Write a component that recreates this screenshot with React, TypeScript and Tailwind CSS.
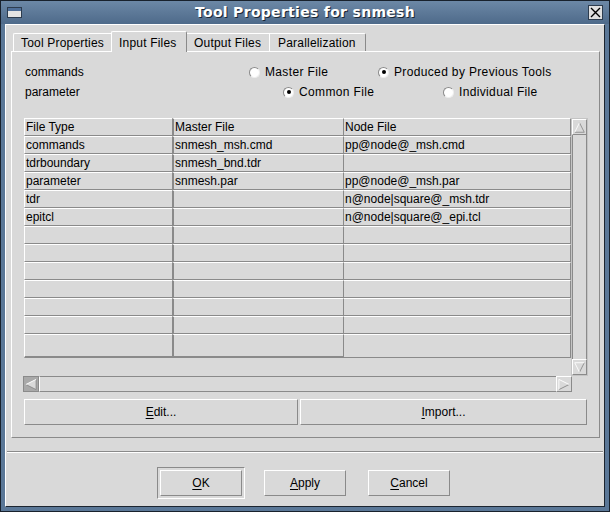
import React from 'react';

const rows = [
  ['commands', 'snmesh_msh.cmd', 'pp@node@_msh.cmd'],
  ['tdrboundary', 'snmesh_bnd.tdr', ''],
  ['parameter', 'snmesh.par', 'pp@node@_msh.par'],
  ['tdr', '', 'n@node|square@_msh.tdr'],
  ['epitcl', '', 'n@node|square@_epi.tcl'],
  ['', '', ''],
  ['', '', ''],
  ['', '', ''],
  ['', '', ''],
  ['', '', ''],
  ['', '', ''],
  ['', '', ''],
];

const Radio = ({ checked }: { checked?: boolean }) => (
  <span className="w-[11px] h-[11px] rounded-full bg-white border border-t-[#8a8a8a] border-l-[#8a8a8a] border-r-[#eeeeee] border-b-[#eeeeee] flex items-center justify-center mr-[5px]">
    {checked && <span className="w-[4px] h-[4px] rounded-full bg-black" />}
  </span>
);

const Raised = 'border border-t-white border-l-white border-r-[#8a8a8a] border-b-[#8a8a8a]';

const Mn = ({ c, rest }: { c: string; rest: string }) => (
  <span>
    <span className="underline underline-offset-2">{c}</span>
    {rest}
  </span>
);

// scrollbar arrow: light edge towards the top-left, shadow edge towards the bottom-right
const Arrow = ({ dir }: { dir: 'up' | 'down' | 'left' | 'right' }) => {
  const a = {
    up: { fill: '7.5,2 13,13 2,13', light: 'M2 13 L7.5 2', dark: 'M7.5 2 L13 13 L2 13' },
    down: { fill: '2,2 13,2 7.5,13', light: 'M7.5 13 L2 2 L13 2', dark: 'M13 2 L7.5 13' },
    left: { fill: '2,7.5 13,2 13,13', light: 'M13 2 L2 7.5', dark: 'M2 7.5 L13 13 L13 2' },
    right: { fill: '2,2 13,7.5 2,13', light: 'M2 13 L2 2 L13 7.5', dark: 'M13 7.5 L2 13' },
  }[dir];
  return (
    <svg width="15" height="15" viewBox="0 0 15 15">
      <polygon points={a.fill} fill="#d9d9d9" />
      <path d={a.dark} stroke="#8a8a8a" fill="none" strokeWidth="1" />
      <path d={a.light} stroke="#ffffff" fill="none" strokeWidth="1" />
    </svg>
  );
};

export default function App() {
  return (
    <div
      className="w-[610px] h-[512px] bg-[#5a7797] border border-[#18212c] flex flex-col px-[4px] pb-[4px] text-[12px] text-black"
      style={{ fontFamily: '"Liberation Sans", Arial, sans-serif' }}
    >
      {/* title bar */}
      <div className="h-[23px] shrink-0 flex items-center relative bg-gradient-to-b from-[#6c88a6] to-[#4e6a8a] -mx-[4px] px-[6px]">
        <div className="w-[15px] h-[11px] bg-[#e4e4e4] border border-[#2d3c4e] flex flex-col">
          <div className="h-[3px] bg-[#4f6f99]" />
        </div>
        <div
          className="flex-1 text-center text-white font-bold text-[14px] tracking-[0.3px]"
          style={{ fontFamily: '"DejaVu Sans", sans-serif', textShadow: '1px 1px 0 #1b2735' }}
        >
          Tool Properties for snmesh
        </div>
        <div className="w-[15px] h-[15px] bg-[#e0e0e0] border border-[#2d3c4e] flex items-center justify-center">
          <svg width="11" height="11" viewBox="0 0 11 11">
            <path d="M1 1 L10 10 M10 1 L1 10" stroke="#000" strokeWidth="1.4" />
          </svg>
        </div>
      </div>

      {/* body */}
      <div className="flex-1 bg-[#d9d9d9] border border-t-white border-l-white border-r-[#1c2530] border-b-[#1c2530] flex flex-col">
        {/* tabs */}
        <div className="flex items-end pl-[7px] pt-[6px] h-[26px] shrink-0 tracking-[0.2px]">
          <div className="w-[98px] h-[18px] pl-[7px] flex items-center rounded-tl-[2px] border-t border-l border-t-white border-l-white">
            Tool Properties
          </div>
          <div className="w-[76px] h-[21px] -mb-[1px] relative z-10 bg-[#d9d9d9] pl-[7px] flex items-start pt-[2px] rounded-t-[2px] border-t border-l border-r border-t-white border-l-white border-r-[#8a8a8a]">
            Input Files
          </div>
          <div className="w-[82px] h-[18px] pl-[7px] flex items-center border-t border-t-white">Output Files</div>
          <div className="w-[97px] h-[18px] pl-[8px] flex items-center rounded-tr-[2px] border-t border-l border-r border-t-white border-l-white border-r-[#8a8a8a]">
            Parallelization
          </div>
        </div>

        {/* panel */}
        <div className={`ml-[5px] w-[589px] h-[387px] shrink-0 ${Raised} pl-[12px] pt-[10px] flex flex-col`}>
          <div className="h-[20px] flex items-center">
            <span className="w-[225px] pl-[1px]">commands</span>
            <span className="w-[129px] flex items-center tracking-[0.35px]">
              <Radio />
              Master File
            </span>
            <span className="flex items-center tracking-[0.35px]">
              <Radio checked />
              Produced by Previous Tools
            </span>
          </div>
          <div className="h-[20px] flex items-center">
            <span className="w-[259px] pl-[1px]">parameter</span>
            <span className="w-[160px] flex items-center tracking-[0.35px]">
              <Radio checked />
              Common File
            </span>
            <span className="flex items-center tracking-[0.35px]">
              <Radio />
              Individual File
            </span>
          </div>

          {/* table + vertical scrollbar */}
          <div className="mt-[16px] flex">
            <div className="w-[547px] flex flex-col">
              <div className="h-[18px] flex">
                <div className="w-[148px] border-t border-b border-l border-t-white border-l-white border-b-[#8a8a8a] pl-[1px] leading-[16px]">File Type</div>
                <div className="w-[171px] border-t border-b border-l-2 border-t-white border-b-[#8a8a8a] border-l-[#8a8a8a] pl-[1px] leading-[16px]">Master File</div>
                <div className="w-[228px] border-t border-b border-l border-r border-t-white border-b-[#8a8a8a] border-l-[#8a8a8a] border-r-[#8a8a8a] pl-[1px] leading-[16px]">Node File</div>
              </div>
              {rows.map((r, i) => (
                <div key={i} className={`${i === rows.length - 1 ? 'h-[24px]' : 'h-[18px]'} flex`}>
                  <div className={`w-[148px] border-t border-b border-l border-t-white border-l-white border-b-[#8a8a8a] pl-[1px] leading-[16px] ${i === rows.length - 1 ? 'border-b-2' : ''}`}>{r[0]}</div>
                  <div className={`w-[171px] border-t border-b border-l-2 border-t-white border-b-[#8a8a8a] border-l-[#8a8a8a] pl-[1px] leading-[16px] ${i === rows.length - 1 ? 'border-b-2' : ''}`}>{r[1]}</div>
                  <div className="w-[228px] border-t border-b border-l border-r border-t-white border-b-[#8a8a8a] border-l-[#8a8a8a] border-r-[#8a8a8a] pl-[1px] leading-[16px]">{r[2]}</div>
                </div>
              ))}
            </div>
            <div className="w-[17px] h-[258px] flex flex-col border border-[#c4c4c4]">
              <div className={`h-[16px] ${Raised} flex items-center justify-center bg-[#d9d9d9]`}>
                <Arrow dir="up" />
              </div>
              <div className="flex-1 border-l border-r border-[#8a8a8a] bg-[#d9d9d9]" />
              <div className={`h-[16px] ${Raised} flex items-center justify-center`}>
                <Arrow dir="down" />
              </div>
            </div>
          </div>

          {/* horizontal scrollbar */}
          <div className="-ml-[1px] w-[549px] h-[16px] flex">
            <div className="w-[16px] h-[16px] bg-[#a9a9a9] border border-[#8a8a8a] flex items-center justify-center">
              <Arrow dir="left" />
            </div>
            <div className="flex-1 border-t border-b border-t-[#8a8a8a] border-b-[#8a8a8a] bg-[#d9d9d9] border-l border-l-white" />
            <div className={`w-[16px] h-[16px] ${Raised} flex items-center justify-center`}>
              <Arrow dir="right" />
            </div>
          </div>

          <div className="mt-[7px] flex gap-[2px]">
            <button className={`w-[274px] h-[26px] ${Raised} flex items-center justify-center`}>
              <Mn c="E" rest="dit..." />
            </button>
            <button className={`w-[287px] h-[26px] ${Raised} flex items-center justify-center`}>
              <Mn c="I" rest="mport..." />
            </button>
          </div>
        </div>

        {/* separator */}
        <div className="mt-[13px] mx-[1px] border-t border-b border-t-[#8a8a8a] border-b-white" />

        {/* bottom buttons */}
        <div className="mt-[14px] flex items-center">
          <div className="ml-[151px] w-[88px] h-[32px] border border-t-[#8a8a8a] border-l-[#8a8a8a] border-r-white border-b-white p-[2px]">
            <button className={`w-full h-full ${Raised} flex items-center justify-center`}>
              <Mn c="O" rest="K" />
            </button>
          </div>
          <button className={`ml-[19px] w-[82px] h-[26px] ${Raised} flex items-center justify-center`}>
            <Mn c="A" rest="pply" />
          </button>
          <button className={`ml-[22px] w-[82px] h-[26px] ${Raised} flex items-center justify-center`}>
            <Mn c="C" rest="ancel" />
          </button>
        </div>
      </div>
    </div>
  );
}
